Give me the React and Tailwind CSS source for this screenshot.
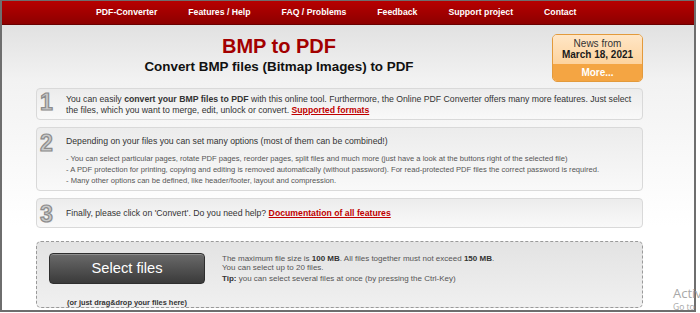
const navItems = ['PDF-Converter', 'Features / Help', 'FAQ / Problems', 'Feedback', 'Support project', 'Contact']

function Digit({ children, className }) {
  return (
    <div className={`h-[11px] w-[29px] shrink-0 pl-[3px] text-[23px] font-bold leading-none text-[#c9c9c9] [-webkit-text-stroke:1.2px_#8c8c8c] [text-shadow:1px_1px_0_#e8e8e8] ${className}`}>
      {children}
    </div>
  )
}

function StepBox({ children, className }) {
  return (
    <div className={`flex items-start rounded-[4px] border border-[#d9d9d9] bg-[linear-gradient(to_bottom,#ececec,#f9f9f9)] ${className}`}>
      {children}
    </div>
  )
}

export default function App() {
  return (
    <div className="relative h-[313px] w-[700px] overflow-hidden bg-white font-['Liberation_Sans',Arial,sans-serif] text-[#333]">
      <div className="h-[312px] w-[696px] overflow-hidden border-x-2 border-t border-b-2 border-[#6e6e6e] bg-[linear-gradient(to_bottom,#dadada_0px,#f2f2f2_80px,#ffffff_225px)]">
        <nav className="flex h-[24px] items-center gap-[31px] border-b border-[#6a0000] bg-[linear-gradient(to_bottom,#b70000,#8d0000)] pl-[94px] text-[8.7px] font-bold text-white">
          {navItems.map((item) => (
            <span key={item}>{item}</span>
          ))}
        </nav>

        <div className="pl-[34px] pr-[51px] pt-[9px]">
          <div className="flex items-start gap-[30px]">
            <div className="flex-1 pt-[1px] text-center">
              <h1 className="text-[20px] font-bold leading-[22px] text-[#a30000]">BMP to PDF</h1>
              <h2 className="mt-[2px] text-[13.4px] font-bold leading-[16px] text-[#111]">
                Convert BMP files (Bitmap Images) to PDF
              </h2>
            </div>
            <div className="w-[91px] overflow-hidden rounded-[5px] border border-[#e39a3c] text-center text-[10px] leading-[11px]">
              <div className="bg-[linear-gradient(to_bottom,#ffe6c6,#fdd39e)] pb-[4px] pt-[3px]">
                <div className="text-[#333]">News from</div>
                <div className="font-bold text-[#1a1a1a]">March 18, 2021</div>
              </div>
              <div className="flex h-[17px] items-center justify-center bg-[#f4a543] font-bold text-white">More...</div>
            </div>
          </div>

          <div className="mt-[6px] flex flex-col gap-[7px] text-[8.7px] leading-[11px]">
            <StepBox className="pb-[3.5px] pt-[4.5px]">
              <Digit className="-mt-[3px]">1</Digit>
              <p className="whitespace-nowrap">
                You can easily <b>convert your BMP files to PDF</b> with this online tool. Furthermore, the Online PDF Converter offers many more features. Just select
                <br />
                the files, which you want to merge, edit, unlock or convert.{' '}
                <a className="font-bold text-[#c00000] underline">Supported formats</a>
              </p>
            </StepBox>

            <StepBox className="pb-[4.5px] pt-[7.5px]">
              <Digit className="-mt-[4px]">2</Digit>
              <div className="whitespace-nowrap">
                <p>Depending on your files you can set many options (most of them can be combined!)</p>
                <ul className="mt-[6px] text-[7.6px] leading-[11px] text-[#555]">
                  <li>- You can select particular pages, rotate PDF pages, reorder pages, split files and much more (just have a look at the buttons right of the selected file)</li>
                  <li>- A PDF protection for printing, copying and editing is removed automatically (without password). For read-protected PDF files the correct password is required.</li>
                  <li>- Many other options can be defined, like header/footer, layout and compression.</li>
                </ul>
              </div>
            </StepBox>

            <StepBox className="py-[8.5px]">
              <Digit className="-mt-[5px]">3</Digit>
              <p className="whitespace-nowrap">
                Finally, please click on 'Convert'. Do you need help?{' '}
                <a className="font-bold text-[#c00000] underline">Documentation of all features</a>
              </p>
            </StepBox>
          </div>

          <div className="mt-[13px] flex h-[67px] items-start rounded-[5px] border border-dashed border-[#9a9a9a] bg-[linear-gradient(to_bottom,#e3e3e3,#f0f0f0)] pl-[12px] pt-[11px]">
            <div className="flex w-[156px] flex-col items-center">
              <button
                type="button"
                className="h-[31px] w-[156px] rounded-[4px] border border-[#2e2e2e] bg-[linear-gradient(to_bottom,#6a6a6a,#3a3a3a)] text-[14.7px] leading-none text-white shadow-[inset_0_1px_0_rgba(255,255,255,0.25)]"
              >
                Select files
              </button>
              <div className="mt-[14px] whitespace-nowrap text-[7.4px] font-bold leading-[9px] text-[#333]">
                (or just drag&amp;drop your files here)
              </div>
            </div>
            <div className="ml-[17px] mt-[2px] whitespace-nowrap text-[8px] leading-[8.5px] text-[#555]">
              <p>
                The maximum file size is <b className="text-[#333]">100 MB</b>. All files together must not exceed{' '}
                <b className="text-[#333]">150 MB</b>.
              </p>
              <p>You can select up to 20 files.</p>
              <p className="mt-[3px]">
                <b className="text-[#333]">Tip:</b> you can select several files at once (by pressing the Ctrl-Key)
              </p>
            </div>
          </div>
        </div>
      </div>

      <div className="absolute left-[673px] top-[285px] font-['Open_Sans',sans-serif] text-[13px] leading-[16px] text-[#a8a8a8]">
        <div>Activate</div>
        <div className="text-[8.5px] leading-[11px]">Go to Settings</div>
      </div>
    </div>
  )
}
